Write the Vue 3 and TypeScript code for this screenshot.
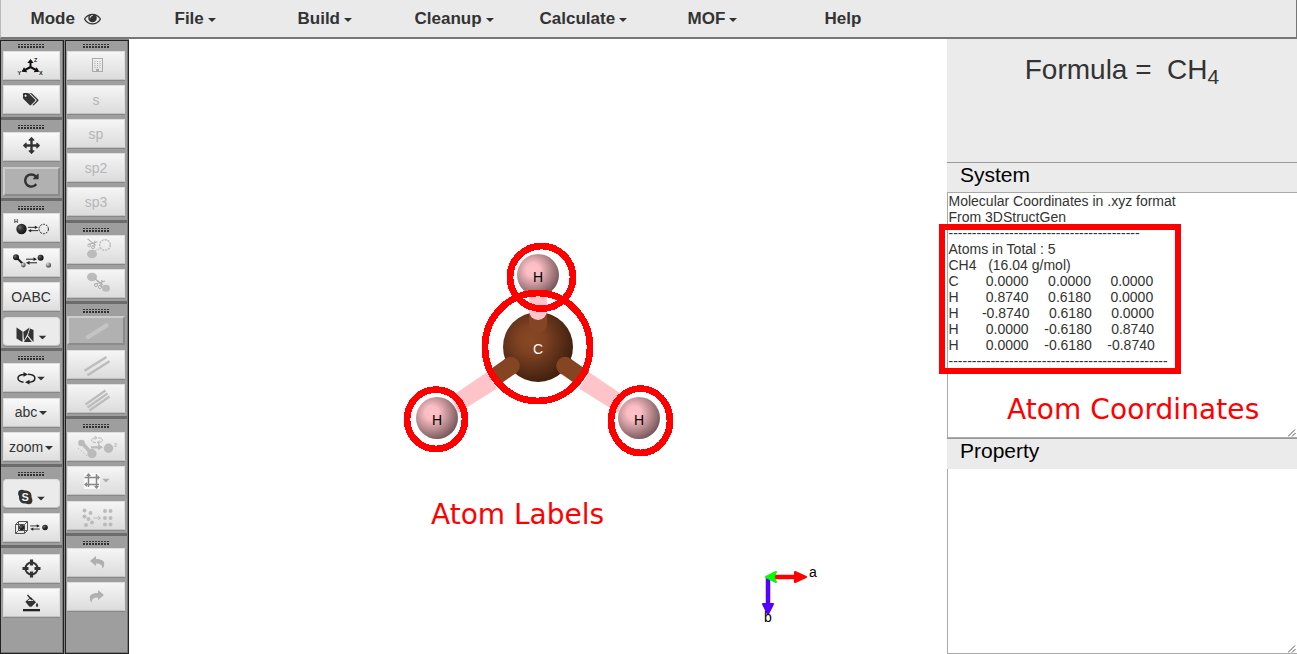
<script setup lang="ts">
interface Mark { x: number; y: number; t: string; kind?: 'faded' | 'skype' }
interface Tool { icon?: string; text?: string; caret?: boolean; active?: boolean; flat?: boolean; marks?: Mark[] }
interface Group { grip: boolean; tools: Tool[] }

const menus: { label: string; kind: 'eye' | 'caret' | 'plain' }[] = [
  { label: 'Mode', kind: 'eye' },
  { label: 'File', kind: 'caret' },
  { label: 'Build', kind: 'caret' },
  { label: 'Cleanup', kind: 'caret' },
  { label: 'Calculate', kind: 'caret' },
  { label: 'MOF', kind: 'caret' },
  { label: 'Help', kind: 'plain' },
]

const mainTools: Group[] = [
  { grip: true, tools: [{ icon: 'axes', marks: [{ x: 31, y: 10.5, t: 'Z' }, { x: 14.5, y: 23.5, t: 'Y' }, { x: 36, y: 23.5, t: 'X' }] }, { icon: 'tags' }] },
  { grip: true, tools: [{ icon: 'move' }, { icon: 'rotate', active: true }] },
  { grip: true, tools: [{ icon: 'swap-atom', marks: [{ x: 11, y: 10, t: 'H' }] }, { icon: 'swap-bond' }, { text: 'OABC' }, { icon: 'material', flat: true }] },
  { grip: true, tools: [{ icon: 'spin' }, { text: 'abc', caret: true }, { text: 'zoom', caret: true }] },
  { grip: true, tools: [{ icon: 'style', flat: true, marks: [{ x: 22.2, y: 22.3, t: 'S', kind: 'skype' }] }, { icon: 'cell' }] },
  { grip: false, tools: [{ icon: 'target' }, { icon: 'fill' }] },
]

const buildTools: Group[] = [
  { grip: true, tools: [{ icon: 'building' }, { text: 's' }, { text: 'sp' }, { text: 'sp2' }, { text: 'sp3' }] },
  { grip: true, tools: [{ icon: 'cut-atom' }, { icon: 'cut-bond' }] },
  { grip: true, tools: [{ icon: 'single', active: true }, { icon: 'double' }, { icon: 'triple' }] },
  { grip: true, tools: [{ icon: 'twist', marks: [{ x: 46, y: 15, t: '2', kind: 'faded' }] }, { icon: 'crop' }, { icon: 'arrange' }] },
  { grip: true, tools: [{ icon: 'undo' }, { icon: 'redo' }] },
]

const columns = [
  { name: 'main', groups: mainTools },
  { name: 'build', groups: buildTools },
]

const sp = (n: number): string => ' '.repeat(n)
const report: string = [
  'Molecular Coordinates in .xyz format',
  'From 3DStructGen',
  '-'.repeat(41),
  'Atoms in Total : 5',
  `CH4${sp(3)}(16.04 g/mol)`,
  `C${sp(7)}0.0000${sp(5)}0.0000${sp(5)}0.0000`,
  `H${sp(7)}0.8740${sp(5)}0.6180${sp(5)}0.0000`,
  `H${sp(6)}-0.8740${sp(5)}0.6180${sp(5)}0.0000`,
  `H${sp(7)}0.0000${sp(4)}-0.6180${sp(5)}0.8740`,
  `H${sp(7)}0.0000${sp(4)}-0.6180${sp(4)}-0.8740`,
  '-'.repeat(47),
].join('\n')
</script>

<template>
  <div class="app">
    <svg class="defs" width="0" height="0" aria-hidden="true">
      <defs>
        <radialGradient id="ball" cx="0.35" cy="0.35" r="0.7">
          <stop offset="0" stop-color="#777" /><stop offset="0.4" stop-color="#333" /><stop offset="1" stop-color="#111" />
        </radialGradient>
        <radialGradient id="pale-ball" cx="0.35" cy="0.3" r="0.7">
          <stop offset="0" stop-color="#ddd" /><stop offset="1" stop-color="#444" />
        </radialGradient>
      </defs>
      <symbol id="i-caret" viewBox="0 0 8 4"><path d="M0 0H8L4 4Z" fill="currentColor" /></symbol>
      <symbol id="i-swap" viewBox="0 0 11 8">
        <path d="M0 2.2H9M11 5.8H2" stroke="#222" stroke-width="1" />
        <path d="M7.5 0.3L11 2.2L7.5 4ZM3.5 4L0 5.8L3.5 7.7Z" fill="#222" />
      </symbol>
      <symbol id="i-scissors" viewBox="0 0 12 12">
        <path d="M0 1L9 8M1 7L11 4M8 3L7 10" stroke="#b0b0b0" stroke-width="1.2" fill="none" />
        <circle cx="2" cy="8" r="1.6" fill="none" stroke="#b0b0b0" />
        <circle cx="6" cy="10" r="1.6" fill="none" stroke="#b0b0b0" />
      </symbol>

      <symbol id="i-axes" viewBox="0 0 57 29">
        <path d="M27.5 16V10M27.5 16L22 19M27.5 16L33 19" stroke="#111" stroke-width="2" />
        <path d="M24.3 12L27.5 8L30.7 12ZM18.5 20.8L21 16.3L24.3 21.300ZM36.300 20.8L33.7 16.3L30.700 21.300Z" fill="#111" />
      </symbol>
      <symbol id="i-tags" viewBox="0 0 57 29">
        <g transform="translate(20.5 7) scale(.00815)">
          <path fill="#333" d="M384 448q0-53-37.500-90.500t-90.500-37.500-90.500 37.500-37.500 90.500 37.500 90.500 90.500 37.500 90.500-37.500 37.500-90.500zm1067 576q0 53-37 90l-491 492q-39 37-91 37-53 0-90-37l-715-716q-38-37-64.500-101t-26.500-117v-416q0-52 38-90t90-38h416q53 0 117 26.500t102 64.500l715 714q37 39 37 91zm384 0q0 53-37 90l-491 492q-39 37-91 37-36 0-59-14t-53-45l470-470q37-37 37-90 0-52-37-91l-715-714q-38-38-102-64.500t-117-26.500h224q53 0 117 26.500t102 64.500l715 714q37 39 37 91z" />
        </g>
      </symbol>
      <symbol id="i-move" viewBox="0 0 57 29">
        <g transform="translate(20.1 5.1) scale(.00937)">
          <path fill="#333" d="M1792 896q0 26-19 45l-256 256q-19 19-45 19t-45-19-19-45v-128h-384v384h128q26 0 45 19t19 45-19 45l-256 256q-19 19-45 19t-45-19l-256-256q-19-19-19-45t19-45 45-19h128v-384h-384v128q0 26-19 45t-45 19-45-19l-256-256q-19-19-19-45t19-45l256-256q19-19 45-19t45 19 19 45v128h384v-384h-128q-26 0-45-19t-19-45 19-45l256-256q19-19 45-19t45 19l256 256q19 19 19 45t-19 45-45 19h-128v384h384v-128q0-26 19-45t45-19 45 19l256 256q19 19 19 45z" />
        </g>
      </symbol>
      <symbol id="i-rotate" viewBox="0 0 57 29">
        <g transform="translate(19.8 5) scale(.0095)">
          <path fill="#333" d="M1664 256v448q0 26-19 45t-45 19h-448q-42 0-59-40-17-39 14-69l138-138q-148-137-349-137-104 0-198.500 40.500t-163.500 109.500-109.500 163.500-40.500 198.500 40.500 198.500 109.500 163.500 163.500 109.500 198.500 40.500q119 0 225-52t179-147q7-10 23-12 15 0 25 9l137 138q9 8 9.500 20.500t-7.500 22.500q-109 132-264 204.500t-327 72.500q-156 0-298-61t-245-164-164-245-61-298 61-298 164-245 245-164 298-61q147 0 284.500 55.500t244.500 156.500l130-129q29-31 70-14 39 17 39 59z" />
        </g>
      </symbol>
      <symbol id="i-swap-atom" viewBox="0 0 57 29">
        <circle cx="18.5" cy="16" r="5.2" fill="url(#ball)" />
        <use href="#i-swap" x="25" y="12" width="10" height="8" />
        <circle cx="40.7" cy="16" r="4.7" fill="none" stroke="#222" stroke-dasharray="2 1" />
      </symbol>
      <symbol id="i-swap-bond" viewBox="0 0 57 29">
        <path d="M13 9L20 16" stroke="#222" stroke-width="2" />
        <circle cx="13" cy="9.3" r="3" fill="url(#ball)" />
        <circle cx="20.3" cy="17" r="2.4" fill="url(#pale-ball)" />
        <use href="#i-swap" x="23" y="9" width="11" height="8" />
        <circle cx="37.6" cy="9.7" r="3" fill="url(#ball)" />
        <circle cx="45.5" cy="17" r="2.6" fill="url(#pale-ball)" />
      </symbol>
      <symbol id="i-material" viewBox="0 0 57 29">
        <path d="M13.500 10.500L19.500 14.500V25L13.500 21.500ZM20.300 15L26.500 10.500L24.500 17L21 23.500ZM27 11.500L30.500 13V25L25 18.500ZM24.500 19.500L28.800 25H20.800Z" fill="#333" />
        <use href="#i-caret" x="35.5" y="18.500" width="8" height="4" />
      </symbol>
      <symbol id="i-spin" viewBox="0 0 57 29">
        <path d="M20.500 19.200C12.500 18 13.500 11.500 21.500 11.500M25 11.200C34.500 11.500 33.500 18.700 26 19.200" fill="none" stroke="#222" stroke-width="1.500" />
        <path d="M20.500 9L25 11.500L20.500 13.700ZM26.500 16.700L22 19.200L26.500 21.500Z" fill="#222" />
        <use href="#i-caret" x="34" y="13.500" width="8" height="4" />
      </symbol>
      <symbol id="i-style" viewBox="0 0 57 29">
        <rect x="16" y="11.500" width="12.500" height="13" rx="5.500" fill="#333" />
        <circle cx="18.800" cy="14.500" r="3.700" fill="#333" /><circle cx="25.700" cy="21.500" r="3.700" fill="#333" />
        <use href="#i-caret" x="34" y="17.500" width="8" height="4" />
      </symbol>
      <symbol id="i-cell" viewBox="0 0 57 29">
        <path d="M12.500 11.500H21.500V20.500H12.500ZM15.500 8.500H24.500V17.500H15.500ZM12.500 11.500L15.500 8.500M21.500 11.500L24.500 8.500M21.500 20.500L24.500 17.500M12.500 20.500L15.500 17.500" fill="none" stroke="#555" />
        <circle cx="18.700" cy="14.500" r="2.700" fill="url(#ball)" />
        <use href="#i-swap" x="27" y="11" width="10" height="7" />
        <circle cx="42" cy="14.500" r="2.800" fill="url(#ball)" />
      </symbol>
      <symbol id="i-target" viewBox="0 0 57 29">
        <circle cx="28.500" cy="14.500" r="6" fill="none" stroke="#333" stroke-width="2" />
        <path d="M28.500 5.500V11.500M28.500 17.500V23.500M19.500 14.500H25.500M31.500 14.500H37.500" stroke="#333" stroke-width="3.200" />
      </symbol>
      <symbol id="i-fill" viewBox="0 0 57 29">
        <path d="M20 21H37V23.300H20Z" fill="#222" />
        <path d="M22.300 13.800L27.700 9L33 14.300L28.500 18.700H26.500Z" fill="#333" />
        <path d="M24.500 13L27.500 10.300L30.500 13Z" fill="#eee" /><path d="M24.500 7L29 12" stroke="#333" stroke-width="1.400" />
        <path d="M34 14.500Q31.800 18.500 34 19Q36.300 18.500 34 14.500Z" fill="#333" />
      </symbol>
      <symbol id="i-building" viewBox="0 0 57 29">
        <rect x="24.500" y="7.500" width="10" height="13" fill="none" stroke="#aaa" />
        <path d="M27 10V18M29.500 10V18M32 10V18" stroke="#aaa" stroke-dasharray="1 1" />
        <path d="M28 18H31V21H28Z" fill="#aaa" />
      </symbol>
      <symbol id="i-cut-atom" viewBox="0 0 57 29">
        <use href="#i-scissors" x="18.500" y="3" width="13" height="11" />
        <circle cx="37" cy="10" r="5.300" fill="none" stroke="#bbb" stroke-width="1.500" stroke-dasharray="2 1" />
        <path d="M27 16L33 13" stroke="#bbb" stroke-dasharray="2 1" />
        <ellipse cx="24" cy="19" rx="5" ry="4.300" fill="#bbb" />
      </symbol>
      <symbol id="i-cut-bond" viewBox="0 0 57 29">
        <ellipse cx="24" cy="8" rx="5" ry="4.200" fill="#bbb" />
        <path d="M27 10L35 18" stroke="#bbb" stroke-dasharray="2 1" />
        <use href="#i-scissors" x="26" y="8" width="12" height="12" />
        <ellipse cx="38" cy="19.300" rx="4" ry="3.500" fill="#bbb" />
      </symbol>
      <symbol id="i-single" viewBox="0 0 57 29"><path d="M18.500 22L40 8.500" stroke="#c4c4c4" stroke-width="4.200" /></symbol>
      <symbol id="i-double" viewBox="0 0 57 29"><path d="M16.500 20.800L38.500 7M19.500 25.300L41.500 11.300" stroke="#bcbcbc" stroke-width="2.500" /></symbol>
      <symbol id="i-triple" viewBox="0 0 57 29"><path d="M17.500 20.500L37.500 6.500M19.500 23.500L39.500 9.500M21.500 26.500L41.500 12.500" stroke="#bcbcbc" stroke-width="2.200" /></symbol>
      <symbol id="i-twist" viewBox="0 0 57 29">
        <path d="M14 11L24 22" stroke="#bbb" stroke-width="3.500" />
        <circle cx="13.500" cy="11" r="3.300" fill="#bbb" /><circle cx="24" cy="21.700" r="4.600" fill="#bbb" />
        <path d="M10 16L19 24" stroke="#bbb" stroke-dasharray="1.500 2" />
        <path d="M28 10.500C22 10.500 22 5.800 28 5.800M30 5.800C36 5.800 36 10.300 30 10.500M26.500 4L29 5.800L26.500 7.500M31.500 8.700L29 10.500L31.500 12" fill="none" stroke="#bbb" />
        <path d="M23 14.300H30V12L35 15.300L30 18.500V16.500H23Z" fill="#bbb" />
        <circle cx="40.500" cy="16.300" r="4.700" fill="#bbb" />
      </symbol>
      <symbol id="i-crop" viewBox="0 0 57 29">
        <rect x="16" y="7" width="16" height="16" fill="#f8f8f8" />
        <path d="M20.500 8V18.500H31M16.500 11.500H28.500V22M20.500 18V21M28.500 11V8M17 18.500H21M28 11.500H31" fill="none" stroke="#888" stroke-width="1.500" />
        <path d="M18 10L20.500 7L23 10ZM26 20L28.500 23L31 20ZM29.500 9L32 11.500L29.500 14ZM19 16L16 18.500L19 21Z" fill="#888" />
        <g color="#b0b0b0"><use href="#i-caret" x="34" y="12.500" width="8" height="4" /></g>
      </symbol>
      <symbol id="i-arrange" viewBox="0 0 57 29">
        <g fill="#bbb">
          <circle cx="16.500" cy="9.500" r="2" /><circle cx="22.500" cy="12" r="2" /><circle cx="16.500" cy="15.500" r="2" /><circle cx="20.500" cy="18" r="2" /><circle cx="24" cy="21.500" r="2" /><circle cx="18" cy="24" r="2" />
          <circle cx="37" cy="10" r="2" /><circle cx="42.500" cy="10" r="2" /><circle cx="37" cy="17" r="2" /><circle cx="42.500" cy="17" r="2" /><circle cx="37" cy="23.500" r="2" /><circle cx="42.500" cy="23.500" r="2" />
        </g>
        <path d="M25.500 17H32M30 15L32.500 17L30 19" stroke="#bbb" fill="none" />
      </symbol>
      <symbol id="i-undo" viewBox="0 0 57 29">
        <path d="M22 13L28 8V11Q36 11 36.300 15.500Q36.300 19 34.300 20.500Q34.800 15.500 28 15.500V18Z" fill="#b0b0b0" />
      </symbol>
      <symbol id="i-redo" viewBox="0 0 57 29">
        <path d="M36 13L30 8V11Q22 11 21.700 15.500Q21.700 19 23.700 20.500Q23.200 15.500 30 15.500V18Z" fill="#b0b0b0" />
      </symbol>
    </svg>

    <nav class="menubar">
      <a v-for="m in menus" :key="m.label" class="menu">
        <span>{{ m.label }}</span>
        <svg v-if="m.kind === 'eye'" class="eye" viewBox="0 0 1792 1792">
          <path fill="#333" d="M1664 960q-152-236-381-353 61 104 61 225 0 185-131.500 316.500t-316.500 131.500-316.500-131.500-131.500-316.500q0-121 61-225-229 117-381 353 133 205 333.500 326.500t434.500 121.500 434.500-121.500 333.500-326.500zm-720-384q0-20-14-34t-34-14q-125 0-214.500 89.500t-89.500 214.500q0 20 14 34t34 14 34-14 14-34q0-86 61-147t147-61q20 0 34-14t14-34zm848 384q0 34-20 69-140 230-376.500 368.500t-499.500 138.500-499.500-139-376.500-368q-20-35-20-69t20-69q140-229 376.500-368t499.500-139 499.500 139 376.500 368q20 35 20 69z" />
        </svg>
        <svg v-else-if="m.kind === 'caret'" class="caret"><use href="#i-caret" /></svg>
      </a>
    </nav>

    <main class="body">
      <aside class="toolbars">
        <div v-for="c in columns" :key="c.name" class="bar" :class="c.name">
          <section v-for="(g, gi) in c.groups" :key="gi" class="group" :class="{ bare: !g.grip }">
            <div v-if="g.grip" class="grip"></div>
            <button v-for="(t, ti) in g.tools" :key="ti" class="tool" :class="{ active: t.active, flat: t.flat }">
              <svg v-if="t.icon" class="icon" viewBox="0 0 57 29">
                <use :href="'#i-' + t.icon" width="57" height="29" />
                <text v-for="m in t.marks ?? []" :key="m.t" :x="m.x" :y="m.y" class="tiny" :class="m.kind">{{ m.t }}</text>
              </svg>
              <template v-else>
                <span>{{ t.text }}</span>
                <svg v-if="t.caret" class="caret small"><use href="#i-caret" /></svg>
              </template>
            </button>
          </section>
        </div>
      </aside>

      <svg class="scene" viewBox="129 39 818 615">
        <defs>
          <radialGradient id="carbon" cx="0.4" cy="0.4" r="0.63">
            <stop offset="0" stop-color="#8a4824" /><stop offset="0.3" stop-color="#7f4222" /><stop offset="1" stop-color="#3e1f0e" />
          </radialGradient>
          <radialGradient id="hydrogen" cx="0.38" cy="0.38" r="0.66">
            <stop offset="0" stop-color="#ffc2c8" /><stop offset="0.25" stop-color="#fabdc3" /><stop offset="1" stop-color="#745659" />
          </radialGradient>
        </defs>
        <circle cx="538" cy="347" r="35" fill="url(#carbon)" />
        <path d="M529 313H547V324A9 9 0 0 1 529 324Z" fill="#854523" />
        <path d="M529 285H547V311A9 9 0 0 1 529 311Z" fill="#ffc4ca" />
        <path d="M486.500 372.500L451 396.500L458 413L497 388.500Z" fill="#ffc4ca" />
        <path d="M589.500 372.500L625 396.500L618 413L579 388.500Z" fill="#ffc4ca" />
        <path d="M510.500 366L492 379M565.500 366L584 379" stroke="#854523" stroke-width="18" />
        <circle cx="510.800" cy="365.800" r="9" fill="#854523" /><circle cx="565.200" cy="365.800" r="9" fill="#854523" />
        <circle cx="538" cy="275" r="21" fill="url(#hydrogen)" />
        <circle cx="437" cy="418" r="21" fill="url(#hydrogen)" />
        <circle cx="639" cy="418" r="21" fill="url(#hydrogen)" />
        <g class="label">
          <text x="538" y="282">H</text><text x="437" y="425">H</text><text x="639" y="425">H</text>
          <text class="light" x="538" y="354">C</text>
        </g>
        <g class="rings">
          <ellipse cx="541.500" cy="277.300" rx="31.500" ry="31.300" />
          <ellipse cx="537.500" cy="347" rx="52.500" ry="54" />
          <ellipse cx="436" cy="419.300" rx="29" ry="29.700" />
          <ellipse cx="640.500" cy="420.800" rx="29.500" ry="32.200" />
        </g>
        <text class="note" x="431" y="524">Atom Labels</text>
        <path d="M772 577H798" stroke="#f00" stroke-width="4.500" />
        <path d="M795 572L806 577L795 582Z" fill="#f00" stroke="#f00" stroke-width="2" stroke-linejoin="round" />
        <path d="M768 578V606" stroke="#5500ff" stroke-width="4.500" />
        <path d="M763 604L768 614L773 604Z" fill="#5500ff" stroke="#5500ff" stroke-width="2" stroke-linejoin="round" />
        <path d="M766 577L776 572L773.500 577L776 582Z" fill="#0f0" stroke="#0f0" stroke-width="2" stroke-linejoin="round" />
        <g class="label"><text x="813" y="577">a</text><text x="768" y="622">b</text></g>
      </svg>

      <aside class="info">
        <div class="formula">Formula =&nbsp; CH<sub>4</sub></div>
        <h2 class="heading">System</h2>
        <div class="area system">
          <pre>{{ report }}</pre>
          <svg class="resize" viewBox="0 0 8 8"><path d="M0 7.500L7 0.500M4 7.500L7.500 4" stroke="#555" /></svg>
        </div>
        <h2 class="heading property">Property</h2>
        <div class="area rest">
          <svg class="resize" viewBox="0 0 8 8"><path d="M0 7.500L7 0.500M4 7.500L7.500 4" stroke="#555" /></svg>
        </div>
      </aside>
    </main>

    <div class="callout"></div>
    <div class="callout-note">Atom Coordinates</div>
  </div>
</template>

<style>
body { margin: 0; overflow: hidden; }
</style>

<style scoped>
.app { position: relative; width: 1297px; height: 654px; overflow: hidden; display: flex; flex-direction: column; background: #fff; color: #333; font-family: "Liberation Sans", Arial, sans-serif; }
.defs { position: absolute; }
.menubar { box-sizing: border-box; height: 39px; flex: none; display: grid; grid-template-columns: 144px 123px 117px 125px 148px 137px 1fr; padding-left: 29.500px; background: #eaeaea; border: solid #777; border-width: 0 1px 2px; border-left-color: #bbb; }
.menu { display: flex; align-items: center; height: 37px; font-size: 17px; font-weight: bold; color: #333; }
.eye { width: 17px; height: 17px; margin-left: 9px; margin-top: -1px; }
.caret { width: 8px; height: 4px; margin: 3px 0 0 4px; color: #333; }
.body { flex: 1; display: flex; min-height: 0; }
.toolbars { width: 129px; flex: none; display: flex; gap: 1px; padding-top: 1px; box-sizing: border-box; background: #858585; }
.bar { box-sizing: border-box; width: 64px; border: 1px solid #222; background: #9e9e9e; box-shadow: inset -1px 0 #777, inset 0 -1px #777; }
.group { display: flex; flex-direction: column; align-items: center; gap: 5.5px; margin-right: 1px; padding-right: 1px; padding-bottom: 2.5px; border-bottom: 3px solid #6c6c6c; }
.group:last-child { border-bottom: 0; }
.main .group:first-child { gap: 5px; padding-bottom: 3px; }
.build .group { gap: 5px; padding-bottom: 3px; }
.build .group:first-child { gap: 5.1px; padding-bottom: 3.600px; }
.build .group:nth-child(4) { gap: 5.5px; }
.grip { width: 27px; height: 4px; margin: 5px 0 -2.5px; background: repeating-linear-gradient(90deg, #333 0 2px, transparent 2px 3px); -webkit-mask: linear-gradient(#000 0 1.500px, transparent 1.500px 2.500px, #000 2.500px); mask: linear-gradient(#000 0 1.500px, transparent 1.500px 2.500px, #000 2.500px); }
.group:first-child .grip { margin: 3px 0 -2px; }
.build .group .grip { margin-bottom: -2px; }
.bare { padding-top: 6px; }
.tool { box-sizing: border-box; flex: none; width: 57px; height: 29px; margin: 0; padding: 0; display: flex; align-items: center; justify-content: center; border: 1px solid #ddd; border-bottom-color: #c2c2c2; background: linear-gradient(#f9f9f9, #dedede); box-shadow: 0 1px #888; font: 14px "Liberation Sans", Arial, sans-serif; color: #333; }
.build .tool { width: 58px; color: #b5b5b5; background: linear-gradient(#f5f5f5, #dcdcdc); }
.tool.active, .build .tool.active { background: #b1b1b1; border: 2px solid; border-color: #ccc #8b8b8b #8b8b8b #ccc; box-shadow: none; }
.tool.flat { background: #ebebeb; border-radius: 4px; }
.icon { width: 57px; height: 29px; flex: none; display: block; color: #333; }
.small { margin: 2px 0 0 2px; }
.tiny { font: bold 5.500px "Liberation Sans", Arial, sans-serif; fill: #222; }
.faded { fill: #bbb; }
.skype { font-size: 11px; fill: #eee; text-anchor: middle; }
.scene { width: 818px; height: 615px; flex: none; display: block; }
.label { font-size: 14px; text-anchor: middle; fill: #000; }
.light { fill: #fff; }
.rings { fill: none; stroke: #f00; stroke-width: 6.800; shape-rendering: crispEdges; }
.note { font: 28px "DejaVu Sans", sans-serif; fill: #f00; }
.info { width: 350px; flex: none; display: flex; flex-direction: column; background: #ebebeb; }
.formula { box-sizing: border-box; height: 123px; padding-top: 14px; text-align: center; font-size: 28px; line-height: 34px; }
.formula sub { font-size: 21px; line-height: 0; position: relative; vertical-align: baseline; bottom: -0.25em; }
.heading { box-sizing: border-box; height: 30px; margin: 0; padding-left: 13px; border-top: 1px solid #999; font-size: 21px; font-weight: normal; line-height: 24px; color: #000; }
.property { height: 31px; border-top: 1px solid #999; }
.area { position: relative; box-sizing: border-box; background: #fff; border: 1px solid #a9a9a9; border-right: 0; }
.system { height: 246px; }
.rest { flex: 1; border-top: 0; }
pre { margin: 0; padding-left: 0.500px; font: 14px/16px "Liberation Sans", Arial, sans-serif; color: #333; }
.resize { position: absolute; right: 1px; bottom: 0; width: 8px; height: 8px; }
.callout { position: absolute; box-sizing: border-box; left: 939px; top: 224px; width: 242px; height: 150px; border: 6px solid #f00; }
.callout-note { position: absolute; left: 1007px; top: 393px; font: 28px/33px "DejaVu Sans", sans-serif; letter-spacing: 0.08px; color: #f00; white-space: nowrap; }
</style>
